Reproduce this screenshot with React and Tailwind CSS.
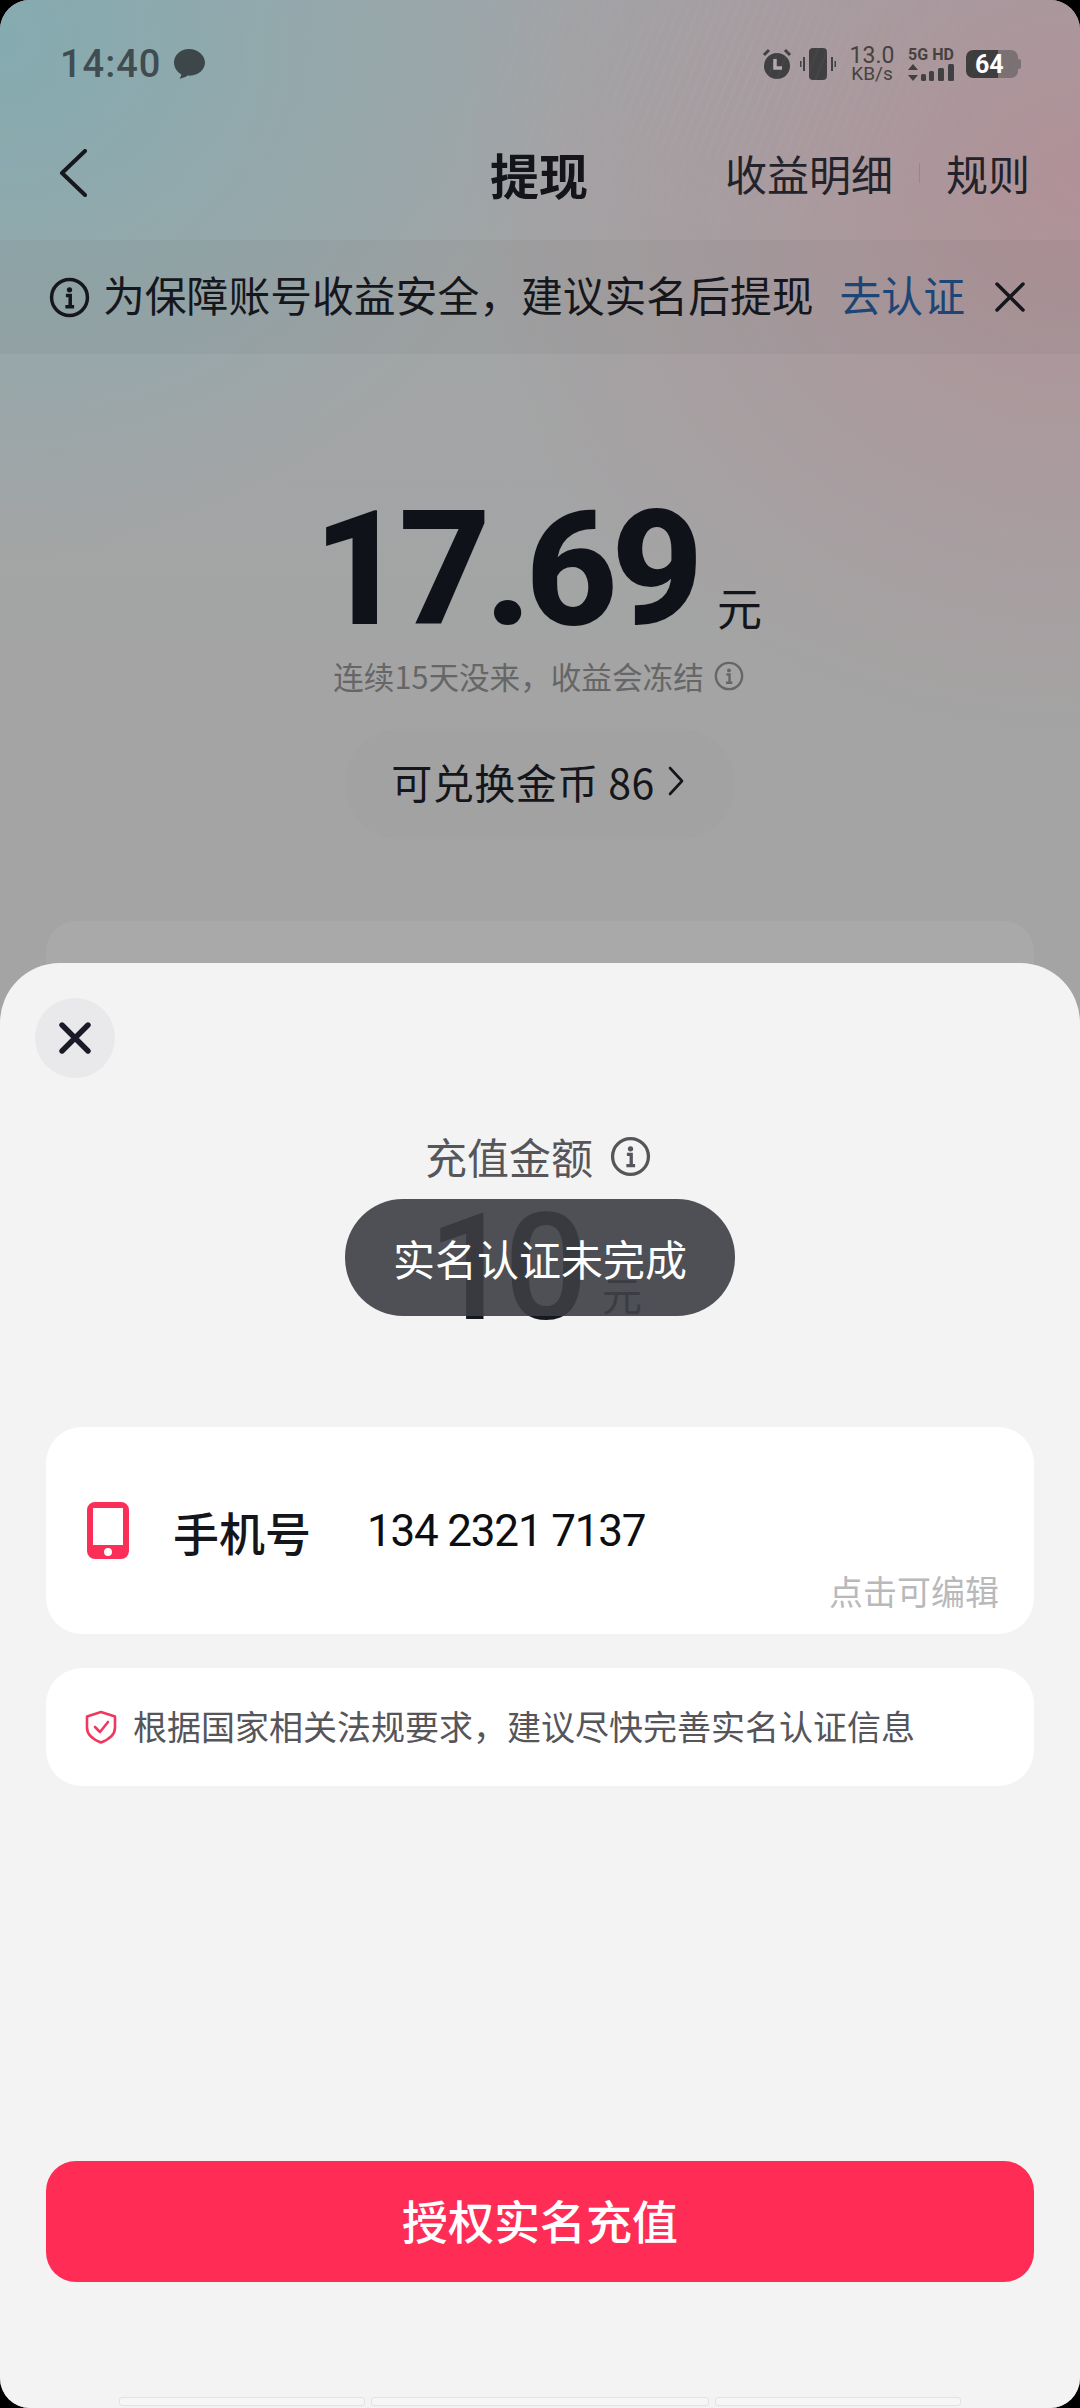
import React from "react";

const cjk = "font-['Noto_Sans_CJK_SC','Noto_Sans',sans-serif]";

function Info({ className, stroke = "currentColor", sw = 3.2 }) {
  return (
    <svg viewBox="0 0 40 40" className={className} fill="none">
      <circle cx="20" cy="20" r="17.5" stroke={stroke} strokeWidth={sw} />
      <circle cx="20" cy="12.5" r="2.6" fill={stroke} />
      <path d="M16.5 18h4.2v11M16 29h8.500" stroke={stroke} strokeWidth={sw} fill="none" />
    </svg>
  );
}

function StatusBar() {
  return (
    <div className="flex h-[126px] items-center justify-between pl-[60px] pr-[59px] pt-[2px] text-[#3f4a4d]">
      <div className="flex items-center gap-[12px]">
        <span className="font-['Roboto',sans-serif] text-[38px] font-medium leading-none tracking-[1px] text-[#414c50]">14:40</span>
        <svg viewBox="0 0 32 32" className="h-[32px] w-[32px]" fill="#3d4649">
          <path d="M16 1C7.7 1 1 7 1 14.6c0 5 2.9 9.4 7.3 11.8-.1 1.500-1 3.200-1.900 4.300 3-.2 6-1.400 8.200-3.100.8.100 1.500.1 2.400.1 8.300 0 15-6 15-13.100C32 7 24.300 1 16 1z" />
        </svg>
      </div>
      <div className="flex items-center text-[#45413f]">
        <svg viewBox="0 0 32 32" className="mr-[7px] h-[32px] w-[32px]" fill="#403f41">
          <circle cx="16" cy="18" r="13" />
          <path d="M3 7l5-5M29 7l-5-5" stroke="#403f41" strokeWidth="3" />
          <path d="M14 11v9h7" stroke="#b4a9ac" strokeWidth="3.500" fill="none" />
        </svg>
        <svg viewBox="0 0 36 32" className="mr-[14px] h-[32px] w-[36px]" fill="#403f41">
          <rect x="9" y="0" width="18" height="32" rx="4" />
          <rect x="3" y="9" width="2" height="14" />
          <rect x="0" y="13" width="1.500" height="6" />
          <rect x="31" y="9" width="2" height="14" />
          <rect x="34.500" y="13" width="1.500" height="6" />
        </svg>
        <div className="mr-[12px] flex w-[44px] flex-col items-center font-['Roboto',sans-serif] leading-none">
          <span className="text-[23px] leading-[19px]">13.0</span>
          <span className="text-[19px] leading-[18px]">KB/s</span>
        </div>
        <div className="mr-[10px] flex w-[50px] flex-col items-center">
          <span className="whitespace-nowrap font-['Roboto',sans-serif] text-[16px] font-bold leading-[18px]">5G HD</span>
          <svg viewBox="0 0 48 18" className="h-[18px] w-[48px]" fill="#403f41">
            <path d="M6 0l5 6H1zM6 17l5-6H1z" />
            <rect x="14" y="10" width="5" height="7" rx="1.500" />
            <rect x="22" y="7" width="5" height="10" rx="1.500" />
            <rect x="31" y="4" width="6" height="13" rx="1.500" />
            <rect x="41" y="0" width="6" height="17" rx="1.500" />
          </svg>
        </div>
        <div className="flex items-center">
          <div className="flex h-[28px] w-[52px] items-center overflow-hidden rounded-[7px] bg-[#7b7174]">
            <div className="flex h-full w-[32px] items-center rounded-l-[7px] bg-[#3f3c3e] pl-[9px]">
              <span className="font-['Roboto',sans-serif] text-[25px] font-bold leading-none text-white">64</span>
            </div>
          </div>
          <div className="h-[10px] w-[3px] rounded-r-[2px] bg-[#7b7174]" />
        </div>
      </div>
    </div>
  );
}

function Nav() {
  return (
    <div className="relative flex h-[114px] items-center justify-between pb-[20px] pl-[59px] pr-[50px] text-[#14151a]">
      <svg viewBox="0 0 28 48" className="h-[48px] w-[28px]" fill="none" stroke="#17181d" strokeWidth="4" strokeLinecap="round" strokeLinejoin="round">
        <path d="M26 2L3 24l23 22" />
      </svg>
      <span className="absolute left-[490px] text-[49px] font-semibold leading-none">提现</span>
      <div className="flex items-center text-[#22232a]">
        <span className="text-[42px] leading-none">收益明细</span>
        <span className="mx-[26px] h-[20px] w-px bg-[#8f8b8d]" />
        <span className="text-[42px] leading-none">规则</span>
      </div>
    </div>
  );
}

function Banner() {
  return (
    <div className="flex h-[114px] items-center bg-[rgba(0,0,0,0.03)] pl-[49px] pr-[55px] text-[#16171c]">
      <Info className="mr-[13px] h-[41px] w-[41px]" stroke="#16171c" sw={3.4} />
      <span className="whitespace-nowrap pb-[5px] text-[41.8px] leading-none">为保障账号收益安全，建议实名后提现</span>
      <span className="ml-[26px] whitespace-nowrap pb-[5px] text-[41.8px] leading-none text-[#1d4576]">去认证</span>
      <svg viewBox="0 0 30 30" className="ml-auto h-[30px] w-[30px]" fill="none" stroke="#16171c" strokeWidth="3.500" strokeLinecap="round">
        <path d="M2 2l26 26M28 2L2 28" />
      </svg>
    </div>
  );
}

function Balance() {
  return (
    <div className="flex flex-col items-center">
      <div className="mt-[147px] flex items-end pr-[5px]">
        <span className="font-['Roboto',sans-serif] text-[160px] font-extrabold leading-[138px] tracking-[-6.500px] text-[#10121a]">17.69</span>
        <span className="mb-[10px] ml-[20px] text-[45px] leading-none text-[#14151a]">元</span>
      </div>
      <div className="mt-[22px] flex items-center pr-[3px] text-[#666667]">
        <span className="text-[30.6px] leading-none">连续15天没来，收益会冻结</span>
        <Info className="ml-[10px] h-[30px] w-[30px]" stroke="#666667" />
      </div>
      <div className="mt-[37px] flex h-[110px] w-[390px] items-center justify-center rounded-[55px] bg-[#a2a2a2] pb-[5px] pr-[5px] text-[#15161b]">
        <span className="text-[41px] leading-none tracking-[0.5px]">可兑换金币 86</span>
        <svg viewBox="0 0 16 30" className="ml-[13px] h-[30px] w-[16px]" fill="none" stroke="#15161b" strokeWidth="2.600" strokeLinecap="round" strokeLinejoin="round">
          <path d="M2 2l12 13L2 28" />
        </svg>
      </div>
      <div className="mt-[82px] h-[120px] w-[988px] rounded-[30px] bg-[#a9a9a9]" />
    </div>
  );
}

function Sheet() {
  return (
    <div className="absolute inset-x-0 bottom-0 top-[963px] flex flex-col rounded-t-[60px] bg-[#f3f3f4] px-[46px]">
      <div className="ml-[-11px] mt-[35px] flex h-[80px] w-[80px] items-center justify-center rounded-full bg-[#e9e9eb]">
        <svg viewBox="0 0 32 32" className="h-[32px] w-[32px]" fill="none" stroke="#1a1b26" strokeWidth="5.400" strokeLinecap="round">
          <path d="M3 3l26 26M29 3L3 29" />
        </svg>
      </div>
      <div className="mt-[55px] flex items-center justify-center pr-[4px] text-[#56565a]">
        <span className="text-[42px] leading-[46px]">充值金额</span>
        <Info className="ml-[17px] h-[41px] w-[41px]" stroke="#56565a" />
      </div>
      <div className="mt-[28px] flex h-[120px] items-end justify-center pr-[10px]">
        <span className="font-['Roboto',sans-serif] text-[148px] font-medium leading-[116px] tracking-[-8px] text-[#16171f]">10</span>
        <span className="mb-[13px] ml-[22px] text-[40px] leading-none text-[#35363c]">元</span>
      </div>

      <div className="mt-[100px] h-[207px] rounded-[36px] bg-white pl-[41px] pr-[35px]">
        <div className="flex items-center pt-[75px]">
          <svg viewBox="0 0 42 57" className="h-[57px] w-[42px]">
            <path fillRule="evenodd" fill="#fb2e57" d="M8 0h26a8 8 0 0 1 8 8v41a8 8 0 0 1-8 8H8a8 8 0 0 1-8-8V8a8 8 0 0 1 8-8zM6 6v37h30V6zM21 46a4 4 0 1 0 0 8 4 4 0 0 0 0-8z" />
          </svg>
          <span className="ml-[44px] text-[46px] font-medium leading-none text-[#15161b]">手机号</span>
          <span className="ml-[56px] font-['Roboto',sans-serif] text-[44px] font-[450] leading-none tracking-[-1.2px] text-[#0d0e12]">134 2321 7137</span>
        </div>
        <div className="mt-[15px] text-right text-[34px] leading-none text-[#b9b9bb]">点击可编辑</div>
      </div>

      <div className="mt-[34px] flex h-[118px] items-center rounded-[36px] bg-white pl-[39px]">
        <svg viewBox="0 0 32 34" className="h-[34px] w-[32px]" fill="none" stroke="#f0385f" strokeWidth="2.600" strokeLinecap="round" strokeLinejoin="round">
          <path d="M16 2l14 4.500v11c0 7-6 12-14 15C8 29.500 2 24.500 2 17.500v-11z" />
          <path d="M10 17l5 5 8-10" />
        </svg>
        <span className="ml-[16px] whitespace-nowrap pb-[2px] text-[34px] leading-none text-[#55555a]">根据国家相关法规要求，建议尽快完善实名认证信息</span>
      </div>

      <div className="mt-[375px] flex h-[121px] items-center justify-center rounded-[30px] bg-[#ff2d55]">
        <span className="pb-[6px] text-[46px] font-medium leading-none text-white">授权实名充值</span>
      </div>

      <div className="mt-auto mb-[2px] flex h-[9px] justify-center gap-[6px] px-[73px]">
        <div className="w-[246px] rounded-[3px] border border-[#e2e2e2] bg-[#f6f6f6]" />
        <div className="w-[338px] rounded-[3px] border border-[#e2e2e2] bg-[#f6f6f6]" />
        <div className="w-[246px] rounded-[3px] border border-[#e2e2e2] bg-[#f6f6f6]" />
      </div>
    </div>
  );
}

export default function App() {
  return (
    <div className={`${cjk} h-[2408px] w-[1080px] overflow-hidden bg-black`}>
      <div className="relative h-full w-full overflow-hidden rounded-[30px] bg-[#a4a4a4]">
        <div className="h-[963px] bg-[radial-gradient(ellipse_560px_520px_at_0px_40px,rgba(110,176,184,0.55),rgba(110,176,184,0)_100%),radial-gradient(ellipse_620px_560px_at_1080px_180px,rgba(190,125,135,0.5),rgba(190,125,135,0)_100%),linear-gradient(180deg,#a0a5a8_0%,#a3a5a6_40%,#a4a4a4_70%)]">
          <StatusBar />
          <Nav />
          <Banner />
          <Balance />
        </div>
        <div aria-hidden="true" className="pointer-events-none absolute left-[400px] top-0 h-[320px] w-[680px] bg-[repeating-linear-gradient(112deg,rgba(255,255,255,0.035)_0px,rgba(255,255,255,0.035)_2px,transparent_2px,transparent_9px)] [mask-image:radial-gradient(ellipse_340px_200px_at_50%_25%,black,transparent)]" />
        <Sheet />
        <div className="absolute left-[345px] top-[1199px] flex h-[117px] w-[390px] items-center justify-center rounded-[58px] bg-[rgba(60,62,68,0.9)]">
          <span className="text-[42px] leading-none text-white">实名认证未完成</span>
        </div>
      </div>
    </div>
  );
}
